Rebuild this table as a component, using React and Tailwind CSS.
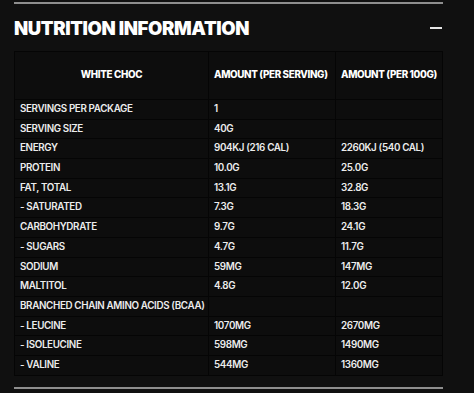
import React from "react";

const rows = [
  ["SERVINGS PER PACKAGE", "1", ""],
  ["SERVING SIZE", "40G", ""],
  ["ENERGY", "904KJ (216 CAL)", "2260KJ (540 CAL)"],
  ["PROTEIN", "10.0G", "25.0G"],
  ["FAT, TOTAL", "13.1G", "32.8G"],
  ["- SATURATED", "7.3G", "18.3G"],
  ["CARBOHYDRATE", "9.7G", "24.1G"],
  ["- SUGARS", "4.7G", "11.7G"],
  ["SODIUM", "59MG", "147MG"],
  ["MALTITOL", "4.8G", "12.0G"],
  ["BRANCHED CHAIN AMINO ACIDS (BCAA)", "", ""],
  ["- LEUCINE", "1070MG", "2670MG"],
  ["- ISOLEUCINE", "598MG", "1490MG"],
  ["- VALINE", "544MG", "1360MG"],
];

export default function App() {
  return (
    <div
      className="w-[474px] h-[393px] bg-[#101010] overflow-hidden text-[#ececec]"
      style={{ fontFamily: "Inter, 'Liberation Sans', sans-serif" }}
    >
      <div className="ml-[14px] w-[429px]">
        <div className="mt-[2px] h-[2px] bg-[#8e8e8e]" />
        <div className="flex items-center justify-between h-[47px]">
          <h2 className="text-[18.5px] font-black tracking-[-0.02em] text-white leading-none mt-[1px]">
            NUTRITION INFORMATION
          </h2>
          <div className="w-[12px] h-[2px] bg-[#e5e5e5] mr-[1px]" />
        </div>
        <table className="border-collapse w-[428px] table-fixed text-[9.8px] tracking-[-0.035em] bg-[#0d0d0d]">
          <colgroup>
            <col className="w-[194px]" />
            <col className="w-[127px]" />
            <col className="w-[107px]" />
          </colgroup>
          <thead>
            <tr className="h-[48px]">
              <th className="border border-[#050505] font-extrabold text-center text-white">WHITE CHOC</th>
              <th className="border border-[#050505] font-extrabold text-left pl-[5px] text-white whitespace-nowrap">AMOUNT (PER SERVING)</th>
              <th className="border border-[#050505] font-extrabold text-left pl-[5px] text-white whitespace-nowrap">AMOUNT (PER 100G)</th>
            </tr>
          </thead>
          <tbody>
            {rows.map((r, i) => (
              <tr key={i} className="h-[19.7px]">
                <td className="border border-[#050505] pl-[5px] font-semibold whitespace-nowrap">{r[0]}</td>
                <td className="border border-[#050505] pl-[5px] font-semibold whitespace-nowrap">{r[1]}</td>
                <td className="border border-[#050505] pl-[5px] font-semibold whitespace-nowrap">{r[2]}</td>
              </tr>
            ))}
          </tbody>
        </table>
        <div className="mt-[11px] h-[2px] bg-[#8e8e8e]" />
      </div>
    </div>
  );
}
